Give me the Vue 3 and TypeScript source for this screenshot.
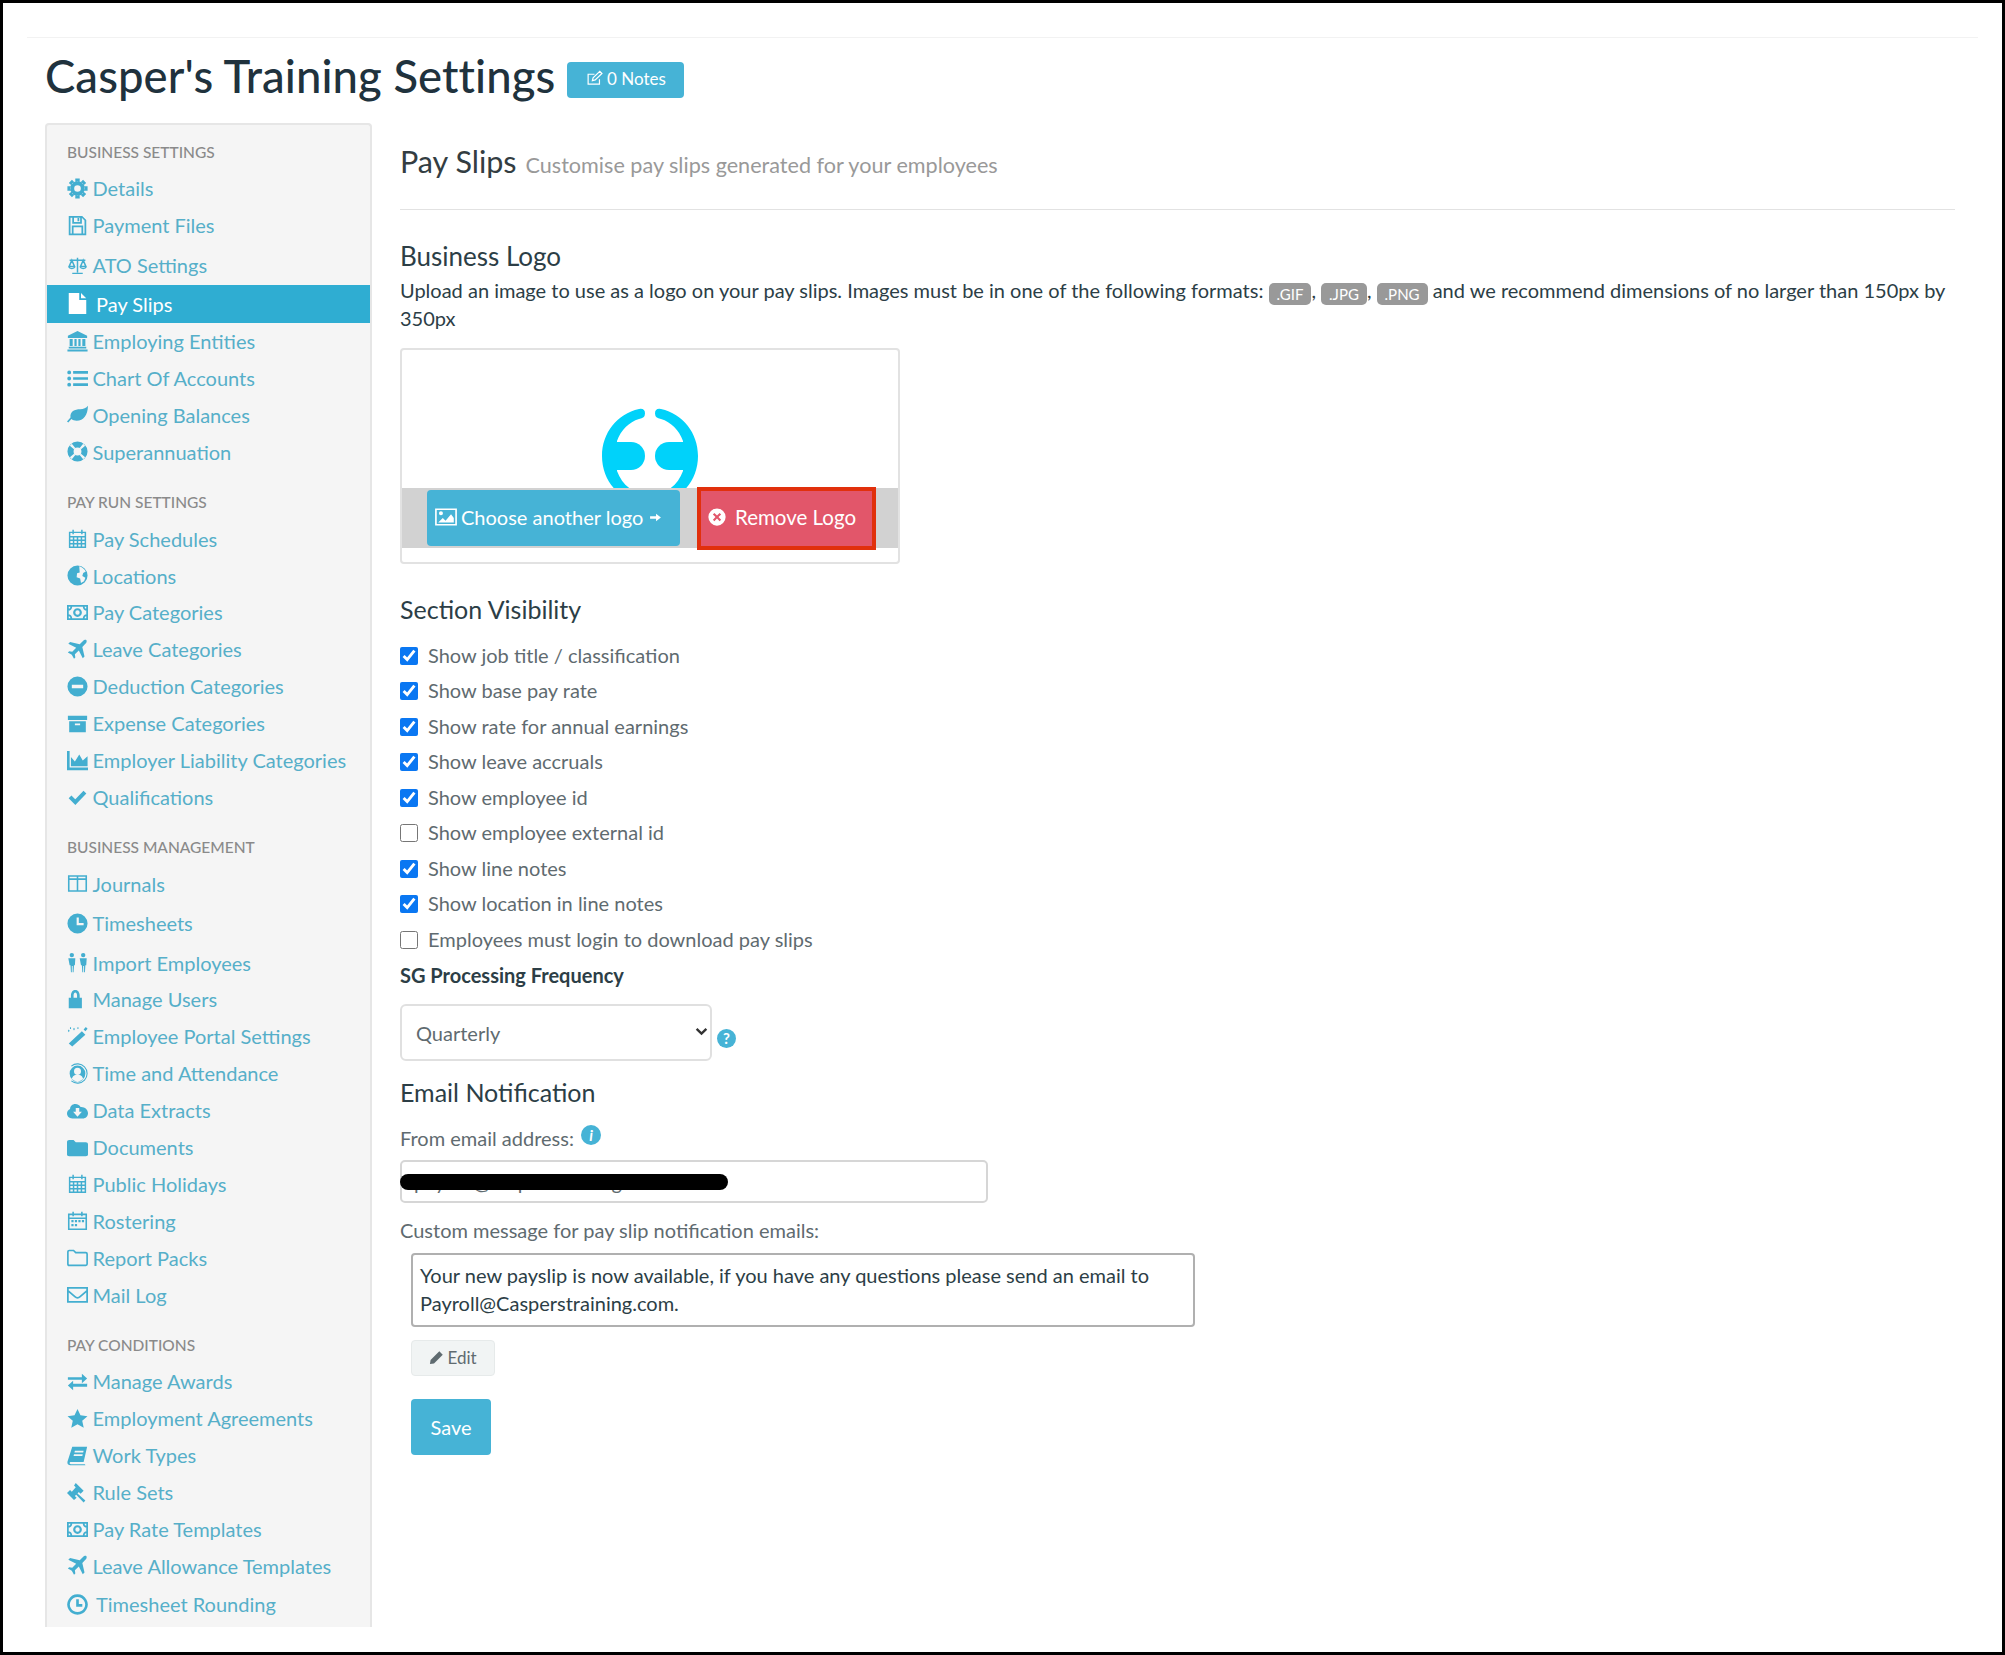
<script setup lang="ts">
interface Icon {
  fill?: string
  stroke?: string
  sw?: number
}
interface Item {
  label: string
  icon: string
  push?: number
  wide?: boolean
  active?: boolean
}

// circle as a sub path, for even-odd holes
const c = (x: number, y: number, r: number) =>
  `M${x - r} ${y}a${r} ${r} 0 1 0 ${2 * r} 0a${r} ${r} 0 1 0 ${-2 * r} 0z`

function gear() {
  let d = ''
  for (let i = 0; i < 8; i++) {
    const a = (i * Math.PI) / 4
    const p = (r: number, o: number) =>
      `${(12 + r * Math.cos(a + o)).toFixed(2)} ${(12 + r * Math.sin(a + o)).toFixed(2)}`
    d += `M${p(8.3, -0.3)}L${p(11.8, -0.22)}L${p(11.8, 0.22)}L${p(8.3, 0.3)}z`
  }
  return d
}

const calendarGrid =
  'M3 5h18v17H3z M3 10h18 M3 14h18 M3 18h18 M7.500 10v12 M12 10v12 M16.500 10v12 M7 2v5 M17 2v5'

const icons: Record<string, Icon> = {
  cog: { fill: gear() + c(12, 12, 8.3) + c(12, 12, 3.8) },
  save: { stroke: 'M3 2h14l4 4v16H3z M7 2v7h9V2 M13 3.500v3.500 M6.500 22v-9h11v9', sw: 2 },
  scale: { stroke: 'M12 3v17 M6 21h12 M3 6h18 M5.500 6l-3 7h6z M18.500 6l-3 7h6z M2 13.500c1 2.500 6 2.500 7 0 M15 13.500c1 2.500 6 2.500 7 0', sw: 1.700 },
  file: { fill: 'M2 0h12v8h8v16H2z M16 0l6 6h-6z' },
  bank: { fill: 'M12 0l11 5.500V8H1V5.500z M3 9h3.500v8H3z M8.500 9H11v8H8.500z M13 9h2.500v8H13z M17.500 9H21v8h-3.500z M2 18h20v2H2z M0.500 21h23v2.500H.5z' },
  list: { fill: c(2.500, 5, 2.200) + c(2.500, 12, 2.200) + c(2.500, 19, 2.200) + 'M7 3.500h17v3H7z M7 10.500h17v3H7z M7 17.500h17v3H7z' },
  leaf: { fill: 'M24 2c-.5 11-5 17-13 17-2.500 0-4.500-.7-6-1.800L1.500 21 0 20l4-4.500C3 8.500 9 6 15 6c4 0 7-1.500 9-4z' },
  ring: { fill: c(12, 12, 11.500) + c(12, 12, 4.500) + 'M5.500 3.200L9.500 8 8 9.500 3.200 5.500z M18.500 3.200l2.300 2.300L16 9.500 14.500 8z M3.200 18.500L8 14.500 9.500 16l-4 4.800z M16 14.500l4.800 4-2.300 2.300-4-4.800z' },
  calendar: { stroke: calendarGrid, sw: 1.700 },
  globe: { fill: c(12, 12, 11.500) + 'M14 1.500c3 1 6 3 7.500 6l-3 1.500-1 3.500 3.500 2-1.500 4-3.500 2-1-5-4-1.500.5-4.500 3-1z' },
  money: { stroke: 'M1 4.500h22v15H1z M1 9c3 0 4-2 4-4.500 M23 9c-3 0-4-2-4-4.500 M1 15c3 0 4 2 4 4.500 M23 15c-3 0-4 2-4 4.500', sw: 2, fill: c(12, 12, 5) + c(12, 12, 2.500) },
  plane: { fill: 'M22 1c1 1 .5 3-1 4.500l-3.500 3.500 2.500 11-2 2-4.500-9L9 17.500l.5 3.500-1.500 1.500-2.500-4.500L1 15.500 2.500 14l3.500.5L10.500 10 1.500 5.500l2-2 11 2.500L18 2.500C19.500 1 21 .5 22 1z' },
  minus: { fill: c(12, 12, 11.500) + 'M5.500 10h13v4h-13z' },
  archive: { fill: 'M1 3h22v5H1z M2.500 9.500h19V22h-19z M9 12v2h6v-2z' },
  chart: { fill: 'M0 1h3v19h21v3H0z M4.500 18.500V8l4.500 5 5-8 4 7 5.500-5v11.500z' },
  check: { stroke: 'M3.500 12.500l6 6L20.500 7', sw: 4.500 },
  columns: { stroke: 'M2 3.500h20v17H2z M12 3.500v17 M2 7h20', sw: 1.800 },
  clock: { fill: c(12, 12, 11.500) + 'M11 5h2.500v6.500H19V14h-8z' },
  males: { fill: c(5.500, 3.500, 2.500) + c(18.500, 3.500, 2.500) + 'M1.500 7h8l-.5 8H8l-.5 8h-1v-7h-1v7h-1l-.5-8H3z M14.500 7h8l-.5 8h-1l-.5 8h-1v-7h-1v7h-1l-.5-8h-1z' },
  lock: { fill: 'M2 10h2.500V7.500C4.500 3 7 1 9.500 1s5 2 5 6.500V10H17v12H2z M7.500 10h4V7.500C11.500 5 10.500 4 9.500 4s-2 1-2 3.500z' },
  wand: { fill: 'M17 6l4 4L6 23.500 2 20z M2 4l1 1.500L2 7 1 5.500z M8 2l1 1.500L8 5 7 3.500z M21.500 1l2 2-2.500 3-2-2z', stroke: 'M4 1.500v2 M12.500 1.500v2', sw: 1.200 },
  person: { fill: c(12, 12, 9) + c(12, 9.500, 4) + 'M5.500 18.500c1-4 3-5 6.500-5s5.500 1 6.500 5l-3 2.500h-7z', stroke: 'M5 3.500A11 11 0 1 1 5 20.500', sw: 1.200 },
  cloud: { fill: 'M6 21C2.500 21 0 18.500 0 15.500c0-2.500 1.500-4.500 3.500-5.300C3.500 7 6 4.500 9.500 4.500c3 0 5 1.500 6 3.500 4.500-.5 8.500 3 8.500 7 0 3.500-2.500 6-6 6z M10 9v4.500H7l5 5.500 5-5.500h-3V9z' },
  folder: { fill: 'M0 6c0-1.500 1-2.500 2.500-2.500h5l2.500 2.500h11.500C23 6 24 7 24 8.500V20c0 1-1 2-2.500 2h-19C1 22 0 21 0 20z' },
  roster: { stroke: 'M2 5h20v17H2z M7 2v5 M17 2v5 M2 9.500h20', sw: 1.800, fill: 'M5 11.500h2.500V14H5z M9 11.500h2.500V14H9z M13 11.500h2.500V14H13z M17 11.500h2.500V14H17z M5 16h2.500v2.500H5z M9 16h2.500v2.500H9z' },
  folderO: { stroke: 'M1 19.500v-14c0-1 .8-1.500 1.500-1.500h5L10 6.500h11.500c1 0 1.500.8 1.500 1.500v11.500c0 1-.8 1.500-1.500 1.500h-19C1.500 21 1 20.500 1 19.500z', sw: 1.900 },
  mail: { stroke: 'M1 4.500h22v16H1z M1 7.500l8 7c2 1.700 4 1.700 6 0l8-7', sw: 2 },
  exchange: { fill: 'M1 7h16V3l6 5.500-6 5.500v-4H1z M23 14.500H7v-3.500L1 16.500 7 22v-4h16z' },
  star: { fill: 'M12 1l3.400 7.400 8 .9-6 5.400 1.700 8L12 18.700l-7.100 4 1.700-8-6-5.400 8-.9z' },
  book: { fill: 'M6 2h17l-4 17.500H4.500c-1 0-1.500.5-1.500 1.200S3.500 22 4.500 22h16l.5 1H4c-2.500 0-4-1.500-3.500-4z M9 6.500l-.5 2h10l.5-2z M8 10.500l-.5 2h10l.5-2z' },
  gavel: { fill: 'M10 1l9 9-3.500 3.500-2-2-1.500 1.500 9 8-2 2.500-8.500-9-1.500 1.500 2 2L8 20.500l-8-8 3.500-3.500 2 2L10 6 8 4z' },
  clockO: { stroke: 'M12 1.800a10.200 10.200 0 1 0 .01 0z M12 6v7h5.500', sw: 3 },
  pencilBox: { stroke: 'M19 13v7H3V6h9 M9 15l1-4 9.500-9 3 3-9.500 9z', sw: 1.700 },
  picture: { stroke: 'M1 3.500h22v17H1z', sw: 1.800, fill: c(6.500, 8, 2.200) + 'M3.500 18l5-5 3 3 6-7 3 4v5z' },
  arrow: { fill: 'M2 9.500h11V5l9 7-9 7v-4.500H2z' },
  timesCircle: { fill: c(12, 12, 11.500) + 'M8.500 6.500l3.500 3.500 3.500-3.500 2 2-3.500 3.500 3.500 3.500-2 2-3.500-3.500-3.500 3.500-2-2 3.500-3.500-3.500-3.500z' },
  pencil: { fill: 'M16.500 2l5.500 5.500L8 21.500l-6.500 1 1-6.500z' },
}

const groups: { title: string; items: Item[] }[] = [
  {
    title: 'BUSINESS SETTINGS',
    items: [
      { label: 'Details', icon: 'cog' },
      { label: 'Payment Files', icon: 'save' },
      { label: 'ATO Settings', icon: 'scale', push: 3 },
      { label: 'Pay Slips', icon: 'file', push: 1.5, wide: true, active: true },
      { label: 'Employing Entities', icon: 'bank' },
      { label: 'Chart Of Accounts', icon: 'list' },
      { label: 'Opening Balances', icon: 'leaf' },
      { label: 'Superannuation', icon: 'ring' },
    ],
  },
  {
    title: 'PAY RUN SETTINGS',
    items: [
      { label: 'Pay Schedules', icon: 'calendar' },
      { label: 'Locations', icon: 'globe' },
      { label: 'Pay Categories', icon: 'money' },
      { label: 'Leave Categories', icon: 'plane' },
      { label: 'Deduction Categories', icon: 'minus' },
      { label: 'Expense Categories', icon: 'archive' },
      { label: 'Employer Liability Categories', icon: 'chart' },
      { label: 'Qualifications', icon: 'check' },
    ],
  },
  {
    title: 'BUSINESS MANAGEMENT',
    items: [
      { label: 'Journals', icon: 'columns' },
      { label: 'Timesheets', icon: 'clock', push: 2.5 },
      { label: 'Import Employees', icon: 'males', push: 2.5 },
      { label: 'Manage Users', icon: 'lock' },
      { label: 'Employee Portal Settings', icon: 'wand' },
      { label: 'Time and Attendance', icon: 'person' },
      { label: 'Data Extracts', icon: 'cloud' },
      { label: 'Documents', icon: 'folder' },
      { label: 'Public Holidays', icon: 'calendar' },
      { label: 'Rostering', icon: 'roster' },
      { label: 'Report Packs', icon: 'folderO' },
      { label: 'Mail Log', icon: 'mail' },
    ],
  },
  {
    title: 'PAY CONDITIONS',
    items: [
      { label: 'Manage Awards', icon: 'exchange' },
      { label: 'Employment Agreements', icon: 'star' },
      { label: 'Work Types', icon: 'book' },
      { label: 'Rule Sets', icon: 'gavel' },
      { label: 'Pay Rate Templates', icon: 'money' },
      { label: 'Leave Allowance Templates', icon: 'plane' },
      { label: 'Timesheet Rounding', icon: 'clockO', push: 1.5, wide: true },
    ],
  },
]

const options = [
  { label: 'Show job title / classification', on: true },
  { label: 'Show base pay rate', on: true },
  { label: 'Show rate for annual earnings', on: true },
  { label: 'Show leave accruals', on: true },
  { label: 'Show employee id', on: true },
  { label: 'Show employee external id', on: false },
  { label: 'Show line notes', on: true },
  { label: 'Show location in line notes', on: true },
  { label: 'Employees must login to download pay slips', on: false },
]

const message =
  'Your new payslip is now available, if you have any questions please send an email to Payroll@Casperstraining.com.'

const logoHalf =
  'M38 2C16 7 1 26 1 49C1 72 16 91 38 96Q44 97 44 91.500Q44 87 38 86C28 83 20 75 16 64L16 34C20 23 28 15 38 12Q44 11 44 6.500Q44 1 38 2z'
</script>

<template>
  <div class="page">
    <div class="title-row">
      <h1>Casper's Training Settings</h1>
      <span class="notes">
        <svg class="ico" viewBox="0 0 24 24">
          <path :d="icons.pencilBox.stroke" fill="none" stroke="currentColor" :stroke-width="icons.pencilBox.sw" />
        </svg>
        0 Notes
      </span>
    </div>

    <div class="layout">
      <nav class="sidebar">
        <section v-for="group in groups" :key="group.title" class="group">
          <h4>{{ group.title }}</h4>
          <a
            v-for="item in group.items"
            :key="item.label"
            class="link"
            :class="{ active: item.active, wide: item.wide }"
            :style="item.push ? { marginTop: item.push + 'px' } : undefined"
          >
            <svg class="ico" viewBox="0 0 24 24">
              <path v-if="icons[item.icon].fill" :d="icons[item.icon].fill" fill="currentColor" fill-rule="evenodd" />
              <path
                v-if="icons[item.icon].stroke"
                :d="icons[item.icon].stroke"
                fill="none"
                stroke="currentColor"
                :stroke-width="icons[item.icon].sw"
              />
            </svg>
            <span>{{ item.label }}</span>
          </a>
        </section>
      </nav>

      <main class="content">
        <div class="page-head">
          <span class="page-title">Pay Slips</span>
          <small>Customise pay slips generated for your employees</small>
        </div>
        <hr />

        <h3 class="first">Business Logo</h3>
        <p class="intro">
          <span>Upload an image to use as a logo on your pay slips. Images must be in one of the following formats: </span>
          <span class="pill">.GIF</span><span>, </span><span class="pill">.JPG</span><span>, </span><span class="pill">.PNG</span>
          <span> and we recommend dimensions of no larger than 150px by </span>
          <span>350px</span>
        </p>

        <div class="logo-box">
          <div class="logo-view">
            <svg class="logo" width="98" height="98" viewBox="0 0 98 98">
              <g fill="#00d2fa">
                <path :d="logoHalf" />
                <rect x="14" y="35" width="16" height="28" />
                <circle cx="30" cy="49" r="14" />
                <g transform="translate(98) scale(-1 1)">
                  <path :d="logoHalf" />
                  <rect x="14" y="35" width="16" height="28" />
                  <circle cx="30" cy="49" r="14" />
                </g>
              </g>
            </svg>
          </div>
          <div class="logo-band">
            <button class="btn-choose" type="button">
              <svg class="ico" viewBox="0 0 24 24">
                <path :d="icons.picture.stroke" fill="none" stroke="currentColor" :stroke-width="icons.picture.sw" />
                <path :d="icons.picture.fill" fill="currentColor" />
              </svg>
              Choose another logo
              <svg class="ico tiny" viewBox="0 0 24 24"><path :d="icons.arrow.fill" fill="currentColor" /></svg>
            </button>
            <button class="btn-remove" type="button">
              <svg class="ico" viewBox="0 0 24 24">
                <path :d="icons.timesCircle.fill" fill="currentColor" fill-rule="evenodd" />
              </svg>
              Remove Logo
            </button>
          </div>
        </div>

        <h3 class="visibility">Section Visibility</h3>
        <div class="checks">
          <label v-for="opt in options" :key="opt.label" class="check">
            <input type="checkbox" :checked="opt.on" />
            <span>{{ opt.label }}</span>
          </label>
        </div>

        <div class="sg-label">SG Processing Frequency</div>
        <div class="sg-row">
          <div class="select-wrap">
            <select class="select">
              <option>Quarterly</option>
            </select>
            <svg class="chevron" viewBox="0 0 12 8">
              <path d="M1.500 1.500L6 6l4.500-4.500" fill="none" stroke="currentColor" stroke-width="2.200" />
            </svg>
          </div>
          <span class="help">?</span>
        </div>

        <h3 class="email">Email Notification</h3>
        <div class="field-label from">From email address: <i class="info">i</i></div>
        <div class="email-wrap">
          <input class="input" type="text" value="payroll@casperstraining.com" />
          <span class="redact"></span>
        </div>
        <div class="field-label custom">Custom message for pay slip notification emails:</div>
        <textarea class="message" :value="message"></textarea>
        <button class="btn-edit" type="button">
          <svg class="ico" viewBox="0 0 24 24"><path :d="icons.pencil.fill" fill="currentColor" /></svg>
          Edit
        </button>
        <button class="btn-save" type="button">Save</button>
      </main>
    </div>
  </div>
</template>

<style>
html,
body {
  margin: 0;
  background: #fff;
}
</style>

<style scoped>
.page {
  box-sizing: border-box;
  width: 2005px;
  height: 1655px;
  overflow: hidden;
  border: 3px solid #000;
  padding: 34px 42px 0;
  font-family: Lato, 'Liberation Sans', sans-serif;
  font-size: 20px;
  color: #2c3e46;
  background: #fff;
  position: relative;
}

.page::before {
  content: '';
  position: absolute;
  left: 24px;
  right: 24px;
  top: 34px;
  border-top: 1px solid #f2f2f2;
}

.title-row {
  display: flex;
  align-items: center;
  height: 76px;
  margin-bottom: 10px;
}

h1 {
  margin: 0;
  font-size: 45.4px;
  font-weight: 500;
  color: #20323d;
  letter-spacing: 0.1px;
  white-space: nowrap;
}

.notes {
  box-sizing: border-box;
  display: inline-flex;
  align-items: center;
  justify-content: center;
  gap: 4px;
  width: 117px;
  height: 36px;
  margin: 10px 0 0 12px;
  padding-bottom: 3px;
  border-radius: 4px;
  background: #46b3d6;
  color: #fff;
  font-size: 17px;
}

.notes .ico {
  width: 17px;
  height: 17px;
}

.layout {
  display: flex;
  align-items: flex-start;
}

.sidebar {
  box-sizing: border-box;
  flex: none;
  width: 327px;
  height: 1504px;
  overflow: hidden;
  padding-top: 9px;
  background: #f5f5f5;
  border: 2px solid #e6e6e6;
  border-bottom: none;
  border-radius: 4px 4px 0 0;
}

.group + .group {
  margin-top: 14px;
}

h4 {
  margin: 0;
  padding-left: 20px;
  height: 36px;
  line-height: 36px;
  font-size: 15.5px;
  font-weight: 500;
  color: #8a8a8a;
}

.link {
  display: flex;
  align-items: center;
  height: 36.9px;
  padding-left: 20px;
  color: #56afc9;
  font-size: 20px;
  white-space: nowrap;
}

.link .ico {
  flex: none;
  width: 21px;
  height: 21px;
  margin-right: 4.5px;
  color: #43aed0;
}

.link.wide .ico {
  margin-right: 8px;
}

.link.active {
  height: 37.5px;
  background: #2fadd2;
  color: #fff;
}

.link.active .ico {
  color: #fff;
}

.content {
  flex: 1;
  min-width: 0;
  margin-left: 28px;
  padding-right: 5px;
}

.page-head {
  display: flex;
  align-items: baseline;
  height: 40px;
  padding-top: 19.5px;
  gap: 9px;
}

.page-title {
  font-size: 30.5px;
  color: #333d42;
}

small {
  font-size: 21.6px;
  color: #999;
}

hr {
  height: 1px;
  margin: 26.5px 0 0;
  border: none;
  background: #e2e2e2;
}

h3 {
  margin: 0;
  height: 30px;
  line-height: 30px;
  font-size: 25px;
  font-weight: 400;
  color: #2c3e46;
}

.first {
  margin-top: 31px;
  font-size: 26px;
}

.intro {
  margin: 5px 0 0;
  line-height: 28px;
  color: #2c3e46;
}

.pill {
  display: inline-block;
  height: 22px;
  margin: -3px 0;
  padding: 0 8px;
  line-height: 22px;
  border-radius: 5px;
  background: #999;
  color: #fff;
  font-size: 15px;
  vertical-align: -2px;
}

.logo-box {
  box-sizing: border-box;
  width: 500px;
  height: 216px;
  margin-top: 16px;
  border: 2px solid #e2e2e2;
  border-radius: 4px;
}

.logo-view {
  height: 138px;
  overflow: hidden;
  text-align: center;
}

.logo {
  margin-top: 57px;
}

.logo-band {
  display: flex;
  align-items: center;
  gap: 17px;
  height: 60px;
  padding-left: 25px;
  background: #d2d2d2;
}

button {
  font-family: inherit;
  cursor: pointer;
  border: none;
}

.btn-choose {
  display: flex;
  align-items: center;
  width: 253px;
  height: 56px;
  padding: 0 0 2px 8px;
  gap: 4px;
  border-radius: 4px;
  background: #46b3d6;
  color: #fff;
  font-size: 20px;
  white-space: nowrap;
}

.btn-choose .ico {
  width: 22px;
  height: 22px;
}

.btn-choose .tiny {
  width: 13px;
  height: 13px;
  margin-left: 2px;
}

.btn-remove {
  box-sizing: border-box;
  display: flex;
  align-items: center;
  gap: 9px;
  width: 179px;
  height: 63px;
  padding: 0 0 2px 7px;
  border: 4px solid #e1300c;
  background: #e2566a;
  color: #fff;
  font-size: 20.5px;
  white-space: nowrap;
}

.btn-remove .ico {
  width: 18px;
  height: 18px;
}

.visibility {
  margin-top: 30px;
}

.checks {
  margin-top: 13px;
}

.check {
  display: flex;
  align-items: center;
  height: 35.5px;
  color: #5f6b70;
}

.check input {
  width: 18px;
  height: 18px;
  margin: 2px 10px 0 0;
  accent-color: #0a77f2;
}

.sg-label {
  height: 36.5px;
  line-height: 36.5px;
  font-weight: 700;
  color: #2c3e46;
  font-size: 20px;
}

.sg-row {
  display: flex;
  align-items: center;
  margin-top: 11px;
}

.select-wrap {
  position: relative;
  width: 312px;
  height: 57px;
}

.select {
  box-sizing: border-box;
  appearance: none;
  width: 100%;
  height: 100%;
  padding-left: 14px;
  border: 2px solid #e0e0e0;
  border-radius: 6px;
  background: #fff;
  font-family: inherit;
  font-size: 20px;
  color: #5f6b70;
}

.chevron {
  position: absolute;
  right: 4px;
  top: 23px;
  width: 13px;
  height: 9px;
  color: #333;
  pointer-events: none;
}

.help,
.info {
  display: inline-block;
  width: 19px;
  height: 19px;
  line-height: 19px;
  border-radius: 50%;
  background: #46b3d6;
  color: #fff;
  text-align: center;
  font-size: 15px;
  font-weight: 700;
}

.help {
  margin: 11px 0 0 5px;
}

.email {
  margin-top: 16px;
}

.field-label {
  height: 28px;
  line-height: 28px;
  color: #5f6b70;
}

.from {
  margin-top: 17px;
}

.info {
  position: relative;
  top: -5px;
  margin-left: 2px;
  width: 20px;
  height: 20px;
  line-height: 20px;
}

.email-wrap {
  position: relative;
  width: 588px;
  margin-top: 8px;
}

.input {
  box-sizing: border-box;
  display: block;
  width: 100%;
  height: 43px;
  padding: 0 12px;
  border: 2px solid #d6d6d6;
  border-radius: 5px;
  font-family: inherit;
  font-size: 20px;
  color: #5f6b70;
}

.redact {
  position: absolute;
  left: 0;
  top: 14px;
  width: 328px;
  height: 16px;
  border-radius: 8px;
  background: #000;
}

.custom {
  margin-top: 13px;
}

.message {
  box-sizing: border-box;
  display: block;
  width: 784px;
  height: 74px;
  margin: 9px 0 0 11px;
  padding: 6px 7px;
  border: 2px solid #b0b0b0;
  border-radius: 4px;
  font-family: inherit;
  font-size: 20px;
  line-height: 28px;
  color: #2c3e46;
  resize: none;
  outline: none;
}

.btn-edit {
  display: flex;
  align-items: center;
  justify-content: center;
  gap: 3px;
  width: 84px;
  height: 36px;
  margin: 13px 0 0 11px;
  padding: 0 0 2px;
  border: 1px solid #e6eaea;
  border-radius: 4px;
  background: #f1f4f4;
  color: #5f6b70;
  font-size: 17px;
}

.btn-edit .ico {
  width: 15px;
  height: 15px;
}

.btn-save {
  display: block;
  width: 80px;
  height: 56px;
  margin: 23px 0 0 11px;
  border-radius: 4px;
  background: #46b3d6;
  color: #fff;
  font-size: 20px;
}
</style>
